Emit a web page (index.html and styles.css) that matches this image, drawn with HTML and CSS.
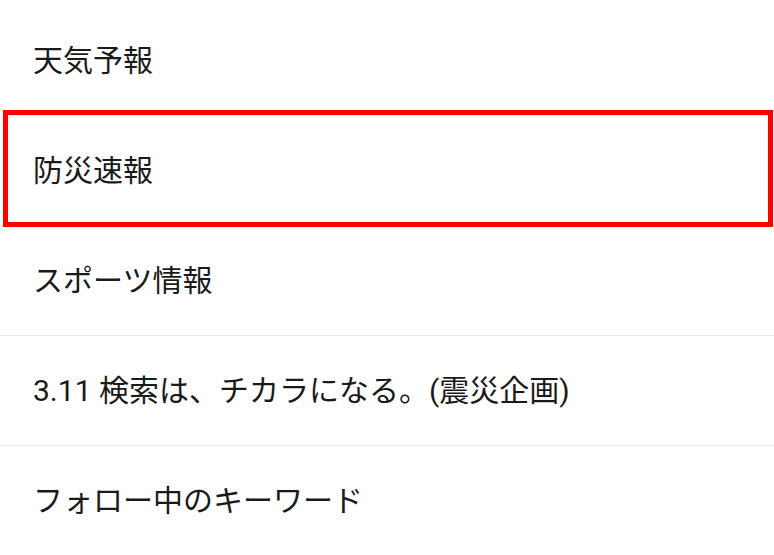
FILE: index.html
```html
<!DOCTYPE html>
<html lang="ja">
<head>
  <meta charset="UTF-8" />
  <meta name="viewport" content="width=device-width, initial-scale=1.0"/>
  <title>メニュー</title>
  <link rel="stylesheet" href="styles.css">
</head>
<body>
  <ul class="menu">
    <li class="menu-item">天気予報</li>
    <li class="menu-item is-marked">防災速報</li>
    <li class="menu-item">スポーツ情報</li>
    <li class="menu-item">3.11 検索は、チカラになる。(震災企画)</li>
    <li class="menu-item">フォロー中のキーワード</li>
  </ul>
</body>
</html>
```

FILE: styles.css
```css
body {
  margin: 0;
  padding: 0;
  background: #fff;
  font-family: Roboto, 'Noto Sans CJK JP', sans-serif;
  color: #1a1a1a;
}

.menu {
  list-style: none;
  margin: 0;
  padding: 6px 0 0;
}

.menu-item {
  position: relative;
  display: flex;
  align-items: center;
  box-sizing: border-box;
  height: 110px;
  padding: 0 0 5px 33px;
  border-bottom: 1px solid #ebebeb;
  font-size: 30px;
}

/* red annotation frame */
.is-marked::after {
  content: "";
  position: absolute;
  top: -6px;
  left: 3px;
  right: 1px;
  bottom: -2px;
  border: 5px solid #ff0000;
}
```
